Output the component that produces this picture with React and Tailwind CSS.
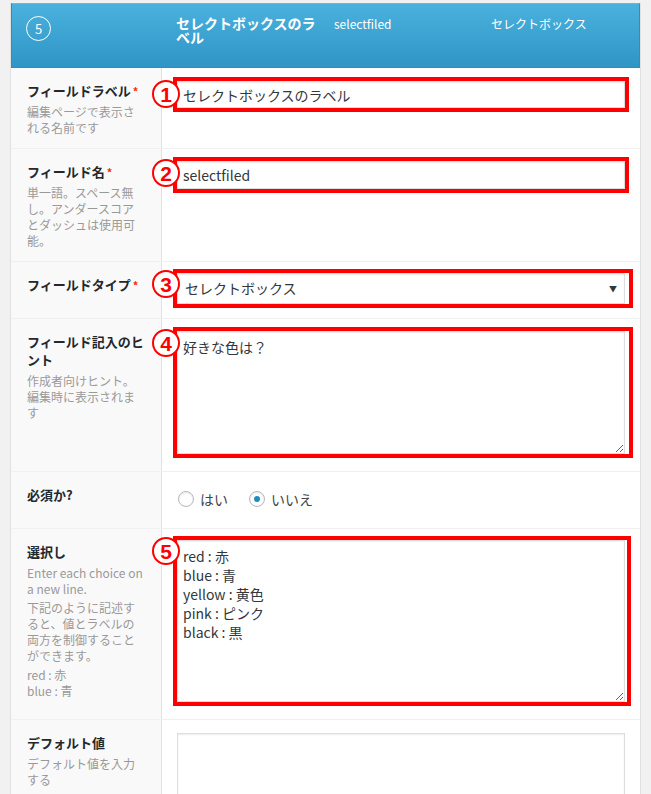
const FONT = "font-['Noto_Sans_CJK_JP','Noto_Sans',sans-serif]";

function Marker({ n, top }) {
  return (
    <span
      className={`absolute left-[141px] ${top} w-[28px] h-[28px] rounded-full border-2 border-[#ff0000] bg-white flex items-center justify-center text-[#ff0000] text-[21px] font-black leading-none font-['Liberation_Sans',sans-serif]`}
    >
      {n}
    </span>
  );
}

function Label({ title, required, children }) {
  return (
    <div className="w-[151px] shrink-0 bg-[#f9f9f9] border-r border-[#e1e1e1] pl-[16px] pr-[17px] pt-[13px] pb-[12px]">
      <div className="text-[13px] leading-[18px] font-bold text-[#23282d] pt-[1px] pb-[1px]">
        {title}
        {required && <span className="text-[#ff2a00] text-[11px] align-top ml-[2px]">*</span>}
      </div>
      {children}
    </div>
  );
}

function Desc({ children }) {
  return <p className="mt-[3px] text-[12px] leading-[16px] text-[#999]">{children}</p>;
}

const inputCls =
  "block w-[448px] border border-[#dddddd] bg-white shadow-[inset_0_1px_2px_rgba(0,0,0,0.07)] text-[14px] text-[#32373c] outline-none";

export default function App() {
  return (
    <div className={`min-h-screen bg-[#f1f1f1] pt-[3px] ${FONT}`}>
      <div className="mx-[10px] border-x border-[#e1e1e1] bg-white">
        {/* header */}
        <div className="h-[65px] flex items-start bg-gradient-to-b from-[#4ab1de] to-[#2f95c5] border border-[#2b8fbf] border-t-[#5bbde6] text-white">
          <div className="w-[164px] shrink-0 pl-[14px] pt-[12px]">
            <div className="w-[25px] h-[25px] rounded-full border border-white flex items-center justify-center text-[13px] leading-none">
              5
            </div>
          </div>
          <div className="w-[158px] shrink-0 pt-[12px]">
            <div className="max-w-[148px] text-[14px] leading-[14px] font-bold">セレクトボックスのラベル</div>
          </div>
          <div className="w-[157px] shrink-0 pt-[12px] text-[12px] leading-[16px]">selectfiled</div>
          <div className="pt-[12px] text-[12px] leading-[16px]">セレクトボックス</div>
        </div>

        {/* row 1 */}
        <div className="relative flex">
          <Label title="フィールドラベル" required>
            <Desc>編集ページで表示される名前です</Desc>
          </Label>
          <div className="pl-[11px] pt-[9px]">
            <div className="border-4 border-[#ff0000] w-fit">
              <input readOnly value="セレクトボックスのラベル" className={`${inputCls} h-[27px] px-[5px]`} />
            </div>
          </div>
          <Marker n="1" top="top-[12px]" />
        </div>

        {/* row 2 */}
        <div className="relative flex border-t border-[#f0f0f0]">
          <Label title="フィールド名" required>
            <Desc>単一語。スペース無し。アンダースコアとダッシュは使用可能。</Desc>
          </Label>
          <div className="pl-[11px] pt-[8px]">
            <div className="border-4 border-[#ff0000] w-fit">
              <input readOnly value="selectfiled" className={`${inputCls} h-[28px] px-[5px]`} />
            </div>
          </div>
          <Marker n="2" top="top-[10px]" />
        </div>

        {/* row 3 */}
        <div className="relative flex border-t border-[#f0f0f0]">
          <Label title="フィールドタイプ" required />
          <div className="pl-[11px] pt-[7px] pb-[10px]">
            <div className="border-4 border-[#ff0000] w-fit pr-[4px] bg-white">
              <div className={`${inputCls} h-[31px] pl-[7px] pr-[7px] flex items-center justify-between`}>
                <span>セレクトボックス</span>
                <span className="text-[8px] text-[#32373c]">▼</span>
              </div>
            </div>
          </div>
          <Marker n="3" top="top-[8px]" />
        </div>

        {/* row 4 */}
        <div className="relative flex border-t border-[#f0f0f0]">
          <Label title="フィールド記入のヒント">
            <Desc>作成者向けヒント。編集時に表示されます</Desc>
          </Label>
          <div className="pl-[11px] pt-[8px] pb-[13px]">
            <div className="border-4 border-[#ff0000] w-fit pr-[4px] bg-white">
              <textarea
                readOnly
                defaultValue="好きな色は？"
                className={`${inputCls} h-[123px] px-[5px] py-[6px] leading-[19px] resize`}
              />
            </div>
          </div>
          <Marker n="4" top="top-[10px]" />
        </div>

        {/* row 5 */}
        <div className="flex border-t border-[#f0f0f0]">
          <Label title="必須か?" />
          <div className="pl-[16px] pt-[18px] pb-[20px] flex items-center gap-[6px] text-[14px] text-[#444] leading-[18px]">
            <span className="w-4 h-4 rounded-full border border-[#b4b9be] bg-white shadow-[inset_0_1px_2px_rgba(0,0,0,0.1)]" />
            <span>はい</span>
            <span className="ml-[15px] w-4 h-4 rounded-full border border-[#b4b9be] bg-white shadow-[inset_0_1px_2px_rgba(0,0,0,0.1)] flex items-center justify-center">
              <span className="w-[6px] h-[6px] rounded-full bg-[#1e8cbe]" />
            </span>
            <span>いいえ</span>
          </div>
        </div>

        {/* row 6 */}
        <div className="relative flex border-t border-[#f0f0f0]">
          <Label title="選択し">
            <Desc>
              Enter each choice on
              <br />
              a new line.
            </Desc>
            <Desc>下記のように記述すると、値とラベルの両方を制御することができます。</Desc>
            <Desc>
              red : 赤
              <br />
              blue : 青
            </Desc>
          </Label>
          <div className="pl-[11px] pt-[7px] pb-[13px]">
            <div className="border-4 border-[#ff0000] w-fit pr-[2px] bg-white">
              <textarea
                readOnly
                defaultValue={"red : 赤\nblue : 青\nyellow : 黄色\npink : ピンク\nblack : 黒"}
                className={`${inputCls} h-[162px] px-[5px] py-[6px] leading-[19px] resize`}
              />
            </div>
          </div>
          <Marker n="5" top="top-[8px]" />
        </div>

        {/* row 7 */}
        <div className="flex border-t border-[#f0f0f0]">
          <Label title="デフォルト値">
            <Desc>デフォルト値を入力する</Desc>
          </Label>
          <div className="pl-[15px] pt-[13px] pb-[13px]">
            <textarea readOnly className={`${inputCls} h-[110px] px-[5px] py-[6px] leading-[19px]`} />
          </div>
        </div>
      </div>
    </div>
  );
}
